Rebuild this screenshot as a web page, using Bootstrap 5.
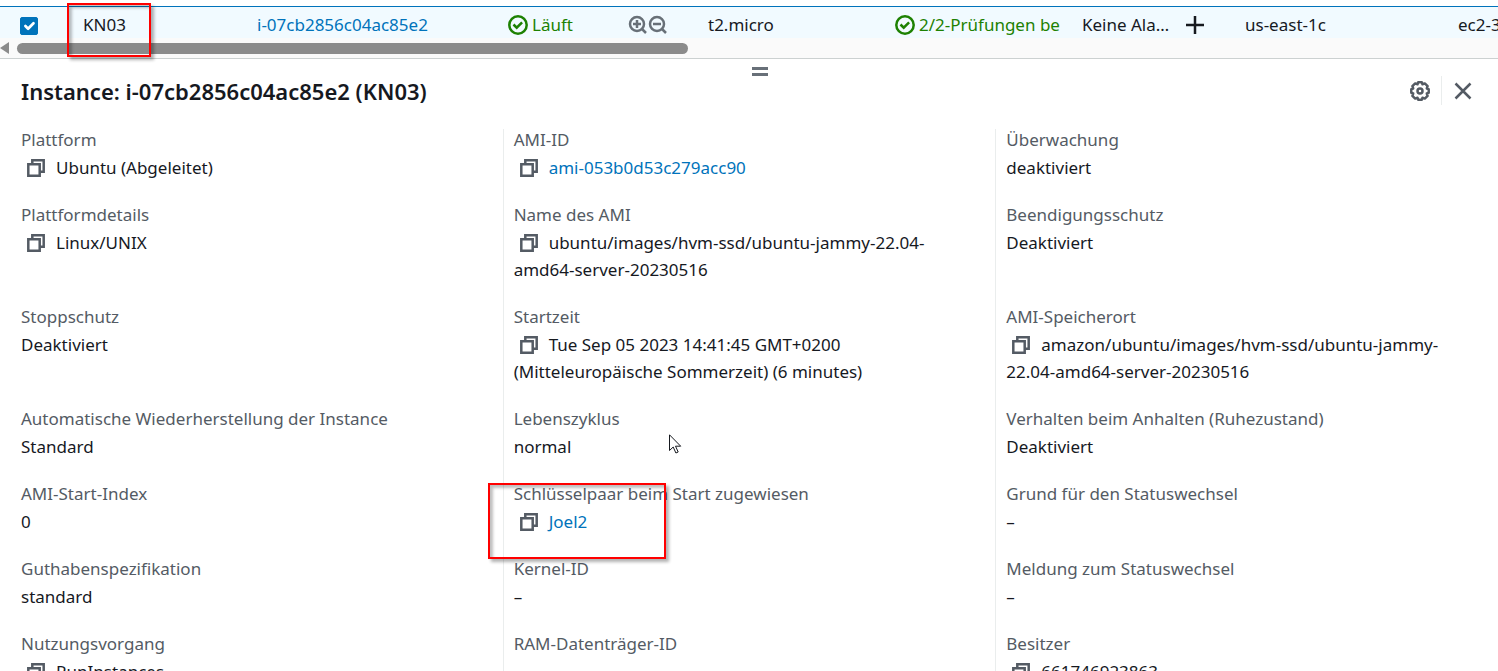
<!DOCTYPE html>
<html lang="de">
<head>
<meta charset="utf-8">
<meta name="viewport" content="width=device-width, initial-scale=1">
<title>Instances | EC2</title>
<link href="https://cdn.jsdelivr.net/npm/bootstrap@5.3.0/dist/css/bootstrap.min.css" rel="stylesheet">
<style>
  body { font-family: "Noto Sans", sans-serif; font-size: 17px; line-height: 27px; color: #16191f; background: #fff; overflow: hidden; height: 100vh; }
  a { color: #0073bb; text-decoration: none; }
  a:hover { text-decoration: underline; }
  svg { display: block; fill: none; stroke: currentColor; stroke-width: 2; }
  .icon-btn { border: 0; padding: 0; background: none; color: #545b64; }

  .instances-wrap { padding-top: 6px; overflow-x: clip; }
  .instances-table { table-layout: fixed; width: 1640px; }
  .instances-table td { padding: 4px 0 0 18px; background: #f1faff; border-top: 1px solid #0073bb; white-space: nowrap; vertical-align: top; }
  .instances-table td:first-child { padding-left: 20px; }
  .instances-table .form-check-input { display: block; width: 18px; height: 18px; border-radius: 2px; margin: 6px 0 0; }
  .instances-table .form-check-input:checked { background-color: #0073bb; border-color: #0073bb; background-size: 18px; }
  .c-check { width: 65px; }
  .c-name { width: 174px; }
  .c-id { width: 251px; }
  .c-state { width: 200px; }
  .c-type, .c-status { width: 187px; }
  .c-alarm { width: 163px; }
  .c-zone { width: 213px; }
  .status-ok { color: #1d8102; }
  .zooms { color: #687078; }
  .zooms svg { stroke-width: 2.5; }
  .zoom-group { margin-right: 22px; }

  .scroll-track { height: 20px; background: #fafafa; }
  .scroll-arrow { border: 6px solid transparent; border-right: 9px solid #8b8b8b; border-left: 0; }
  .scroll-thumb { width: 44.8%; height: 11px; background: #8b8b8b; }

  .split-panel { border-top: 1px solid #ccd1d1; }
  .grip-row { padding: 8px 0 0 22px; }
  .grip { width: 16px; height: 9px; border-top: 3px solid #687078; border-bottom: 3px solid #687078; border-radius: 0; }
  .panel-title { font-size: 22px; line-height: 28px; font-weight: 600; padding-left: 21px; margin: 0; }
  .actions { padding-right: 26px; }
  .actions svg { stroke-width: 2.5; }
  .actions .divider { width: 1px; height: 29px; background: #eaeded; margin: 0 12px 0 11px; }

  .details { padding: 24px 10px 0; }
  .field { padding: 0 20px 23px 10px; border-left: 1px solid #eaeded; }
  .field:first-child { border-left-color: transparent; }
  .field dt { font-weight: 400; line-height: 22px; margin-bottom: 3px; color: #545b64; }
  .field dd { margin: 0; }
  .copy { margin: 0 11px 0 6px; vertical-align: -3px; }
  .copy svg { stroke-width: 2.5; }

  .highlight { position: absolute; border: 2px solid #f00; box-shadow: 3px 3px 3px rgba(0,0,0,.3), inset 3px 3px 3px rgba(0,0,0,.25); z-index: 2; pointer-events: none; }
  .highlight-name { left: 2px; top: -4px; width: 84px; height: 54px; }
  .highlight-key { left: -16px; top: 0; width: 178px; height: 76px; }
  .pointer { position: absolute; left: 165px; top: 26px; stroke-width: 1; }
</style>
</head>
<body>
<svg class="d-none" aria-hidden="true">
  <symbol id="copy" viewBox="0 0 18 18"><path d="M1.300 5.300h11.400v11.400H1.300zM5.300 5V1.300h11.400v11.400H13"/></symbol>
  <symbol id="ok" viewBox="0 0 20 20"><circle cx="10" cy="10" r="8.7" stroke-width="2.500"/><path stroke-width="2.500" d="M5.500 9.500l3.200 3.200 5.400-5.400"/></symbol>
</svg>

<div class="instances-wrap">
  <table class="instances-table">
    <colgroup><col class="c-check"><col class="c-name"><col class="c-id"><col class="c-state"><col class="c-type"><col class="c-status"><col class="c-alarm"><col class="c-zone"><col></colgroup>
    <tbody>
      <tr>
        <td><input class="form-check-input" type="checkbox" checked aria-label="KN03 auswählen"></td>
        <td class="position-relative">KN03<span class="highlight highlight-name"></span></td>
        <td><a href="#">i-07cb2856c04ac85e2</a></td>
        <td>
          <div class="d-flex align-items-center">
            <span class="status-ok d-flex align-items-center gap-1"><svg width="20" height="20"><use href="#ok"/></svg>Läuft</span>
            <span class="zoom-group d-flex ms-auto">
              <button class="icon-btn zooms" aria-label="Filter hinzufügen"><svg width="20" height="20" viewBox="0 0 20 20"><circle cx="9" cy="9" r="7"/><path d="M14 14l4 4M5 9h8M9 5v8"/></svg></button>
              <button class="icon-btn zooms" aria-label="Filter entfernen"><svg width="20" height="20" viewBox="0 0 20 20"><circle cx="9" cy="9" r="7"/><path d="M14 14l4 4M5 9h8"/></svg></button>
            </span>
          </div>
        </td>
        <td>t2.micro</td>
        <td><span class="status-ok d-flex align-items-center gap-1"><svg width="20" height="20"><use href="#ok"/></svg>2/2-Prüfungen be</span></td>
        <td><div class="d-flex align-items-center gap-3">Keine Ala…<button class="icon-btn text-reset" aria-label="Alarm hinzufügen"><svg width="20" height="20" viewBox="0 0 20 20"><path stroke-width="2.500" d="M10 1v18M1 10h18"/></svg></button></div></td>
        <td>us-east-1c</td>
        <td>ec2-3</td>
      </tr>
    </tbody>
  </table>
  <div class="scroll-track d-flex align-items-center gap-2"><span class="scroll-arrow"></span><span class="scroll-thumb rounded-pill"></span></div>
</div>

<section class="split-panel">
  <div class="grip-row d-flex justify-content-center"><button class="icon-btn grip" aria-label="Größe des Bereichs ändern"></button></div>
  <header class="d-flex justify-content-between align-items-center">
    <h1 class="panel-title">Instance: i-07cb2856c04ac85e2 (KN03)</h1>
    <div class="actions d-flex align-items-center">
      <button class="icon-btn" aria-label="Einstellungen"><svg width="20" height="20" viewBox="0 0 20 20"><path stroke-linejoin="round" d="M8.200 1.300h3.600l.7 1.900 2.300-.8 2.800 2.800-.8 2.300 1.900.7v3.600l-1.900.7.8 2.300-2.800 2.800-2.300-.8-.7 1.900H8.200l-.7-1.900-2.300.8-2.800-2.800.8-2.300-1.900-.7V8.200l1.900-.7-.8-2.300 2.800-2.800 2.300.8z"/><circle cx="10" cy="10" r="2.500"/></svg></button>
      <span class="divider"></span>
      <button class="icon-btn" aria-label="Schließen"><svg width="18" height="18" viewBox="0 0 18 18"><path d="M1.500 1.500l15 15M16.500 1.500l-15 15"/></svg></button>
    </div>
  </header>

  <div class="details">
    <div class="row g-0">
      <dl class="col-4 field mb-0"><dt>Plattform</dt><dd><button class="icon-btn copy" aria-label="Kopieren"><svg width="18" height="18"><use href="#copy"/></svg></button>Ubuntu (Abgeleitet)</dd></dl>
      <dl class="col-4 field mb-0"><dt>AMI-ID</dt><dd><button class="icon-btn copy" aria-label="Kopieren"><svg width="18" height="18"><use href="#copy"/></svg></button><a href="#">ami-053b0d53c279acc90</a></dd></dl>
      <dl class="col-4 field mb-0"><dt>Überwachung</dt><dd>deaktiviert</dd></dl>
    </div>
    <div class="row g-0">
      <dl class="col-4 field mb-0"><dt>Plattformdetails</dt><dd><button class="icon-btn copy" aria-label="Kopieren"><svg width="18" height="18"><use href="#copy"/></svg></button>Linux/UNIX</dd></dl>
      <dl class="col-4 field mb-0"><dt>Name des AMI</dt><dd><button class="icon-btn copy" aria-label="Kopieren"><svg width="18" height="18"><use href="#copy"/></svg></button>ubuntu/images/hvm-ssd/ubuntu-jammy-22.04-<wbr>amd64-server-20230516</dd></dl>
      <dl class="col-4 field mb-0"><dt>Beendigungsschutz</dt><dd>Deaktiviert</dd></dl>
    </div>
    <div class="row g-0">
      <dl class="col-4 field mb-0"><dt>Stoppschutz</dt><dd>Deaktiviert</dd></dl>
      <dl class="col-4 field mb-0"><dt>Startzeit</dt><dd><button class="icon-btn copy" aria-label="Kopieren"><svg width="18" height="18"><use href="#copy"/></svg></button>Tue Sep 05 2023 14:41:45 GMT+0200 (Mitteleuropäische Sommerzeit) (6 minutes)</dd></dl>
      <dl class="col-4 field mb-0"><dt>AMI-Speicherort</dt><dd><button class="icon-btn copy" aria-label="Kopieren"><svg width="18" height="18"><use href="#copy"/></svg></button>amazon/ubuntu/images/hvm-ssd/ubuntu-jammy-<wbr>22.04-amd64-server-20230516</dd></dl>
    </div>
    <div class="row g-0">
      <dl class="col-4 field mb-0"><dt>Automatische Wiederherstellung der Instance</dt><dd>Standard</dd></dl>
      <dl class="col-4 field mb-0 position-relative"><dt>Lebenszyklus</dt><dd>normal
        <svg class="pointer" width="13" height="20" viewBox="0 0 13 20" aria-hidden="true"><path fill="#fff" stroke="#16191f" d="M.5.800v15.700l3.700-3.500 2.700 6 2.300-1-2.700-5.800h5.200z"/></svg></dd></dl>
      <dl class="col-4 field mb-0"><dt>Verhalten beim Anhalten (Ruhezustand)</dt><dd>Deaktiviert</dd></dl>
    </div>
    <div class="row g-0">
      <dl class="col-4 field mb-0"><dt>AMI-Start-Index</dt><dd>0</dd></dl>
      <dl class="col-4 field mb-0 position-relative"><dt>Schlüsselpaar beim Start zugewiesen</dt><dd><button class="icon-btn copy" aria-label="Kopieren"><svg width="18" height="18"><use href="#copy"/></svg></button><a href="#">Joel2</a><span class="highlight highlight-key"></span></dd></dl>
      <dl class="col-4 field mb-0"><dt>Grund für den Statuswechsel</dt><dd>–</dd></dl>
    </div>
    <div class="row g-0">
      <dl class="col-4 field mb-0"><dt>Guthabenspezifikation</dt><dd>standard</dd></dl>
      <dl class="col-4 field mb-0"><dt>Kernel-ID</dt><dd>–</dd></dl>
      <dl class="col-4 field mb-0"><dt>Meldung zum Statuswechsel</dt><dd>–</dd></dl>
    </div>
    <div class="row g-0">
      <dl class="col-4 field mb-0"><dt>Nutzungsvorgang</dt><dd><button class="icon-btn copy" aria-label="Kopieren"><svg width="18" height="18"><use href="#copy"/></svg></button>RunInstances</dd></dl>
      <dl class="col-4 field mb-0"><dt>RAM-Datenträger-ID</dt><dd>–</dd></dl>
      <dl class="col-4 field mb-0"><dt>Besitzer</dt><dd><button class="icon-btn copy" aria-label="Kopieren"><svg width="18" height="18"><use href="#copy"/></svg></button>661746923863</dd></dl>
    </div>
  </div>
</section>
<script src="https://cdn.jsdelivr.net/npm/bootstrap@5.3.0/dist/js/bootstrap.bundle.min.js"></script>
</body>
</html>
